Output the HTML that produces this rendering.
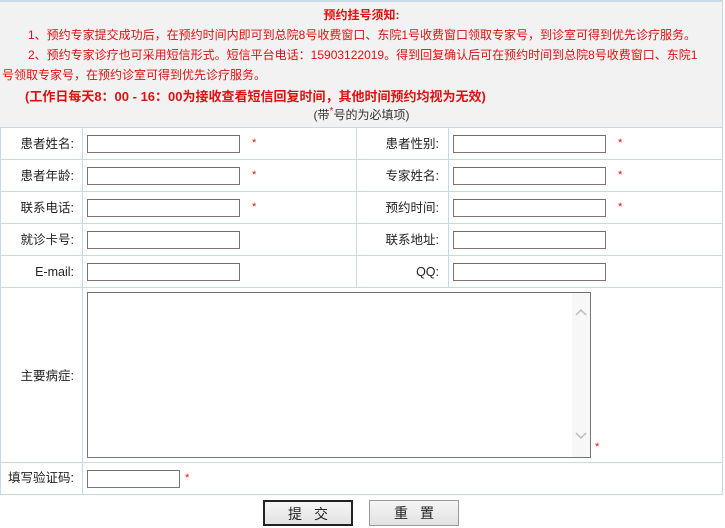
<!DOCTYPE html>
<html><head><meta charset="utf-8"><style>
*{margin:0;padding:0;box-sizing:border-box}
body{width:725px;height:528px;background:#fff;position:relative;overflow:hidden;font-family:"Liberation Sans","Noto Sans CJK SC",sans-serif;font-size:12px;color:#333}
.a{position:absolute;white-space:nowrap}
.hd{position:absolute;left:0;top:0;width:723px;height:127px;background:#f2f2f2;border-top:2px solid #c8dbe8}
.r{color:#e01010}
.hl{position:absolute;left:0;height:1px;background:#c5d9e8}
.vl{position:absolute;width:1px;background:#c5d9e8}
.in{position:absolute;width:153px;height:18px;border:1px solid #767676;border-top-color:#6e6e6e;background:#fff}
.lb{position:absolute;text-align:right;font-size:12.5px;color:#222;line-height:16px}
.st{position:absolute;color:#e01010;font-size:11px}
.btn{position:absolute;top:500px;width:90px;height:26px;background:linear-gradient(#f5f5f5,#e2e2e2);border:1px solid #9a9a9a;font-size:14px;text-align:center;line-height:24px;color:#222;letter-spacing:12px;padding-left:12px}
</style></head><body>
<div class="hd"></div>
<div class="a r" style="left:0;width:723px;text-align:center;top:6px;font-weight:bold;font-size:12px">预约挂号须知:</div>
<div class="a r" style="left:28px;top:26px">1、预约专家提交成功后，在预约时间内即可到总院8号收费窗口、东院1号收费窗口领取专家号，到诊室可得到优先诊疗服务。</div>
<div class="a r" style="left:28px;top:46px">2、预约专家诊疗也可采用短信形式。短信平台电话：15903122019。得到回复确认后可在预约时间到总院8号收费窗口、东院1</div>
<div class="a r" style="left:2px;top:66px">号领取专家号，在预约诊室可得到优先诊疗服务。</div>
<div class="a r" style="left:25px;top:86px;font-weight:bold;font-size:13px">(工作日每天8：00 - 16：00为接收查看短信回复时间，其他时间预约均视为无效)</div>
<div class="a" style="left:0;width:723px;text-align:center;top:106px;color:#333">(带<span class="r" style="font-size:10px;vertical-align:top">*</span>号的为必填项)</div>

<div class="hl" style="top:127px;width:723px"></div>
<div class="hl" style="top:159px;width:723px"></div>
<div class="hl" style="top:191px;width:723px"></div>
<div class="hl" style="top:223px;width:723px"></div>
<div class="hl" style="top:255px;width:723px"></div>
<div class="hl" style="top:287px;width:723px"></div>
<div class="hl" style="top:462px;width:723px"></div>
<div class="hl" style="top:494px;width:723px"></div>
<div class="vl" style="left:0;top:127px;height:367px"></div>
<div class="vl" style="left:82px;top:127px;height:367px"></div>
<div class="vl" style="left:356px;top:127px;height:160px"></div>
<div class="vl" style="left:448px;top:127px;height:160px"></div>
<div class="vl" style="left:722px;top:0;height:494px"></div>

<div class="lb" style="left:0;width:74px;top:136px">患者姓名:</div>
<div class="lb" style="left:0;width:74px;top:168px">患者年龄:</div>
<div class="lb" style="left:0;width:74px;top:200px">联系电话:</div>
<div class="lb" style="left:0;width:74px;top:232px">就诊卡号:</div>
<div class="lb" style="left:0;width:74px;top:264px">E-mail:</div>
<div class="lb" style="left:357px;width:82px;top:136px">患者性别:</div>
<div class="lb" style="left:357px;width:82px;top:168px">专家姓名:</div>
<div class="lb" style="left:357px;width:82px;top:200px">预约时间:</div>
<div class="lb" style="left:357px;width:82px;top:232px">联系地址:</div>
<div class="lb" style="left:357px;width:82px;top:264px">QQ:</div>
<div class="lb" style="left:0;width:74px;top:368px">主要病症:</div>
<div class="lb" style="left:0;width:74px;top:470px">填写验证码:</div>

<div class="in" style="left:87px;top:135px"></div>
<div class="in" style="left:87px;top:167px"></div>
<div class="in" style="left:87px;top:199px"></div>
<div class="in" style="left:87px;top:231px"></div>
<div class="in" style="left:87px;top:263px"></div>
<div class="in" style="left:453px;top:135px"></div>
<div class="in" style="left:453px;top:167px"></div>
<div class="in" style="left:453px;top:199px"></div>
<div class="in" style="left:453px;top:231px"></div>
<div class="in" style="left:453px;top:263px"></div>
<div class="st" style="left:252px;top:137px">*</div>
<div class="st" style="left:252px;top:169px">*</div>
<div class="st" style="left:252px;top:201px">*</div>
<div class="st" style="left:618px;top:137px">*</div>
<div class="st" style="left:618px;top:169px">*</div>
<div class="st" style="left:618px;top:201px">*</div>

<div class="in" style="left:87px;top:292px;width:504px;height:166px"></div>
<div class="a" style="left:572px;top:293px;width:18px;height:164px;background:#f7f7f7"></div>
<svg class="a" style="left:574px;top:308px" width="14" height="10"><path d="M2 7 L7 2 L12 7" fill="none" stroke="#bbb" stroke-width="1.5"/></svg>
<svg class="a" style="left:574px;top:430px" width="14" height="10"><path d="M2 3 L7 8 L12 3" fill="none" stroke="#bbb" stroke-width="1.5"/></svg>
<div class="st" style="left:595px;top:441px">*</div>

<div class="in" style="left:87px;top:470px;width:93px"></div>
<div class="st" style="left:185px;top:472px">*</div>

<div class="btn" style="left:263px;border:2px solid #222">提交</div>
<div class="btn" style="left:369px">重置</div>
</body></html>
